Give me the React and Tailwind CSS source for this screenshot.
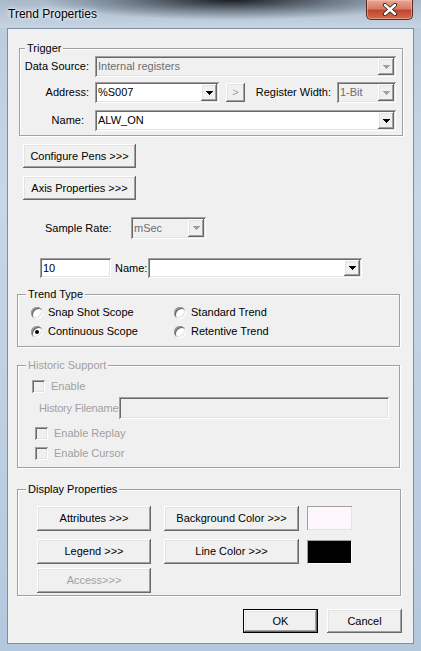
import React from 'react';

const sunken =
  'shadow-[inset_1px_1px_0_#a0a0a0,inset_-1px_-1px_0_#ffffff,inset_2px_2px_0_#696969,inset_-2px_-2px_0_#e3e3e3]';
const raised =
  'shadow-[inset_-1px_-1px_0_#696969,inset_1px_1px_0_#ffffff,inset_-2px_-2px_0_#a0a0a0,inset_2px_2px_0_#e3e3e3]';

const Arrow = ({ disabled }) => (
  <svg width="7" height="4" viewBox="0 0 7 4" shapeRendering="crispEdges">
    <path d="M0 0h7v1H0zM1 1h5v1H1zM2 2h3v1H2zM3 3h1v1H3z" fill={disabled ? '#a0a0a0' : '#000'} />
  </svg>
);

const Combo = ({ value = '', disabled, className = '' }) => (
  <div className={`flex p-[2px] ${sunken} ${disabled ? 'bg-[#f0f0f0] text-[#6d6d6d]' : 'bg-white text-black'} ${className}`}>
    <span className="flex-1 truncate pl-[1px] self-center leading-[13px]">{value}</span>
    <span className={`flex w-[16px] items-center justify-center bg-[#f0f0f0] ${raised}`}>
      <Arrow disabled={disabled} />
    </span>
  </div>
);

const Btn = ({ children, disabled, className = '' }) => (
  <button
    className={`flex items-center justify-center bg-[#f0f0f0] leading-[13px] ${raised} ${disabled ? 'text-[#a0a0a0]' : 'text-black'} ${className}`}
  >
    {children}
  </button>
);

const GroupBox = ({ label, disabled, labelLeft = 'left-[8px]', className = '', children }) => (
  <div
    className={`relative border border-[#a0a0a0] shadow-[inset_1px_1px_0_#ffffff,1px_1px_0_#ffffff] ${className}`}
  >
    <span
      className={`absolute -top-[7px] ${labelLeft} bg-[#f0f0f0] px-[2px] leading-[13px] ${disabled ? 'text-[#a0a0a0]' : 'text-black'}`}
    >
      {label}
    </span>
    {children}
  </div>
);

const Radio = ({ checked, label }) => (
  <div className="flex h-[19px] items-center gap-[5px]">
    <span className="flex h-[12px] w-[12px] items-center justify-center rounded-full bg-white shadow-[inset_1px_1px_0_#a0a0a0,inset_-1px_-1px_0_#ffffff,inset_2px_2px_0_#696969,inset_-2px_-2px_0_#e3e3e3]">
      {checked && <span className="h-[4px] w-[4px] rounded-full bg-black" />}
    </span>
    <span className="leading-[13px]">{label}</span>
  </div>
);

const Check = ({ label, className = '' }) => (
  <div className={`flex items-center gap-[6px] text-[#a0a0a0] ${className}`}>
    <span className={`h-[13px] w-[13px] bg-[#f0f0f0] ${sunken}`} />
    <span className="leading-[13px]">{label}</span>
  </div>
);

export default function App() {
  return (
    <div className="relative flex h-[651px] w-[421px] flex-col overflow-hidden bg-[linear-gradient(180deg,#bccbdc_0%,#c8d7e7_30%,#b4c8dd_100%)] font-['Liberation_Sans',Arial,sans-serif] text-[11px]">
      {/* title bar */}
      <div className="flex h-[28px] items-start justify-between bg-[radial-gradient(ellipse_190px_20px_at_55%_0%,rgba(12,14,18,0.9),rgba(40,46,56,0.45)_55%,transparent_100%),linear-gradient(180deg,#a9b9ca,#c6d4e3)]">
        <span className="pl-[8px] pt-[7px] text-[12px] leading-[15px] text-black [text-shadow:0_0_6px_#ffffff,0_0_3px_#ffffff]">
          Trend Properties
        </span>
        <div className="mr-[8px] flex h-[20px] w-[47px] items-center justify-center rounded-b-[5px] border border-t-0 border-[#5b2a22] bg-[linear-gradient(180deg,#e8a998_0%,#d87a64_45%,#c2462e_55%,#cf6b4f_100%)] shadow-[inset_0_0_0_1px_rgba(255,200,180,0.5)]">
          <svg width="16" height="13" viewBox="0 0 16 13">
            <path d="M3 2l10 9M13 2L3 11" stroke="#3b2420" strokeWidth="4.2" strokeLinecap="round" />
            <path d="M3 2l10 9M13 2L3 11" stroke="#ffffff" strokeWidth="2.4" strokeLinecap="round" />
          </svg>
        </div>
      </div>

      {/* client */}
      <div className="mx-[7px] mb-[7px] flex flex-1 flex-col border border-[#7d8ea1] bg-[#f0f0f0] text-black">
        {/* Trigger */}
        <GroupBox label="Trigger" labelLeft="left-[5px]" className="ml-[11px] mt-[19px] h-[88px] w-[384px]">
          <div className="flex flex-col pr-[6px] pt-[7px]">
            <div className="flex h-[21px] items-center">
              <span className="mr-[6px] w-[69px] text-right">Data Source:</span>
              <Combo value="Internal registers" disabled className="h-[21px] flex-1" />
            </div>
            <div className="mt-[5px] flex h-[21px] items-center">
              <span className="mr-[6px] w-[69px] text-right">Address:</span>
              <Combo value="%S007" className="h-[21px] w-[124px]" />
              <Btn disabled className="ml-[7px] h-[19px] w-[19px] text-[#a0a0a0]">
                &gt;
              </Btn>
              <span className="ml-auto mr-[6px]">Register Width:</span>
              <Combo value="1-Bit" disabled className="h-[21px] w-[59px]" />
            </div>
            <div className="mt-[7px] flex h-[21px] items-center">
              <span className="mr-[6px] w-[69px] pr-[5px] text-right">Name:</span>
              <Combo value="ALW_ON" className="h-[21px] flex-1" />
            </div>
          </div>
        </GroupBox>

        <Btn className="ml-[15px] mt-[8px] h-[24px] w-[113px]">Configure Pens &gt;&gt;&gt;</Btn>
        <Btn className="ml-[15px] mt-[8px] h-[24px] w-[113px]">Axis Properties &gt;&gt;&gt;</Btn>

        <div className="ml-[37px] mt-[17px] flex h-[22px] items-center">
          <span className="w-[86px]">Sample Rate:</span>
          <Combo value="mSec" disabled className="h-[22px] w-[75px]" />
        </div>

        <div className="ml-[32px] mt-[19px] flex h-[20px] items-center">
          <div className={`flex h-[20px] w-[71px] items-center bg-white pl-[3px] ${sunken}`}>10</div>
          <span className="ml-[4px] w-[33px]">Name:</span>
          <Combo className="h-[20px] w-[214px]" />
        </div>

        {/* Trend Type */}
        <GroupBox label="Trend Type" className="ml-[9px] mt-[16px] h-[53px] w-[383px]">
          <div className="grid grid-cols-[143px_auto] pl-[13px] pt-[8px]">
            <Radio label="Snap Shot Scope" />
            <Radio label="Standard Trend" />
            <Radio checked label="Continuous Scope" />
            <Radio label="Retentive Trend" />
          </div>
        </GroupBox>

        {/* Historic Support */}
        <GroupBox label="Historic Support" disabled className="ml-[9px] mt-[18px] h-[103px] w-[383px]">
          <div className="flex flex-col pt-[14px] text-[#a0a0a0]">
            <Check label="Enable" className="ml-[14px] h-[13px]" />
            <div className="ml-[21px] mt-[4px] flex h-[22px] items-center">
              <span className="w-[80px] whitespace-nowrap tracking-[-0.2px]">History Filename</span>
              <div className={`h-[22px] w-[270px] bg-[#f0f0f0] ${sunken}`} />
            </div>
            <Check label="Enable Replay" className="ml-[17px] mt-[8px] h-[13px]" />
            <Check label="Enable Cursor" className="ml-[17px] mt-[7px] h-[13px]" />
          </div>
        </GroupBox>

        {/* Display Properties */}
        <GroupBox label="Display Properties" className="ml-[9px] mt-[21px] h-[107px] w-[384px]">
          <div className="flex flex-col pl-[19px] pt-[16px]">
            <div className="flex items-start">
              <Btn className="h-[25px] w-[114px]">Attributes &gt;&gt;&gt;</Btn>
              <Btn className="ml-[13px] h-[25px] w-[135px]">Background Color &gt;&gt;&gt;</Btn>
              <div className="ml-[8px] h-[24px] w-[45px] bg-[#fdf6fd] shadow-[inset_1px_1px_0_#a0a0a0,inset_-1px_-1px_0_#e3e3e3]" />
            </div>
            <div className="mt-[8px] flex items-start">
              <Btn className="h-[25px] w-[114px]">Legend &gt;&gt;&gt;</Btn>
              <Btn className="ml-[13px] h-[25px] w-[135px]">Line Color &gt;&gt;&gt;</Btn>
              <div className="ml-[8px] mt-[1px] h-[24px] w-[45px] border border-b-[#ffffff] border-l-[#a0a0a0] border-r-[#ffffff] border-t-[#a0a0a0] bg-black" />
            </div>
            <Btn disabled className="mt-[4px] h-[25px] w-[114px]">
              Access&gt;&gt;&gt;
            </Btn>
          </div>
        </GroupBox>

        <div className="mt-[13px] flex justify-end gap-[9px] pr-[11px]">
          <button className="flex h-[24px] w-[75px] border border-black">
            <span className={`flex flex-1 items-center justify-center bg-[#f0f0f0] leading-[13px] ${raised}`}>OK</span>
          </button>
          <Btn className="h-[24px] w-[75px]">Cancel</Btn>
        </div>
      </div>
    </div>
  );
}
